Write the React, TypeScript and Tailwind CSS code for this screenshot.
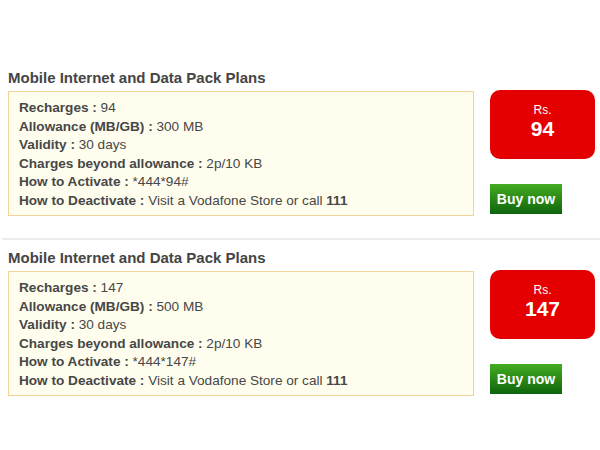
const plans = [
  { price: "94", allowance: "300 MB", code: "*444*94#" },
  { price: "147", allowance: "500 MB", code: "*444*147#" },
];

function Row({ label, children }: { label: string; children: React.ReactNode }) {
  return (
    <div>
      <b className="font-bold">{label} : </b>
      {children}
    </div>
  );
}

function PlanCard({ price, allowance, code }: { price: string; allowance: string; code: string }) {
  return (
    <div className="pl-2">
      <h3 className="text-[15px] font-bold leading-[18px] text-[#454545]">Mobile Internet and Data Pack Plans</h3>
      <div className="mt-[4px] flex items-start">
        <div className="w-[466px] border border-[#f1d49a] bg-[#fffeee] pl-[10px] pt-[7px] pb-[5px] text-[13.6px] leading-[18.5px] text-[#474747]">
          <Row label="Recharges">{price}</Row>
          <Row label="Allowance (MB/GB)">{allowance}</Row>
          <Row label="Validity">30 days</Row>
          <Row label="Charges beyond allowance">2p/10 KB</Row>
          <Row label="How to Activate">{code}</Row>
          <Row label="How to Deactivate">
            Visit a Vodafone Store or call <b className="font-bold">111</b>
          </Row>
        </div>
        <div className="ml-[16px] flex flex-col">
          <div className="-mt-[1px] flex h-[69px] w-[105px] flex-col items-center justify-center rounded-[10px] bg-[#e40000] pb-[5px] text-white">
            <span className="text-[12px] leading-[14px]">Rs.</span>
            <span className="text-[21px] font-bold leading-[24px]">{price}</span>
          </div>
          <button className="mt-[25px] h-[30px] w-[72px] bg-gradient-to-b from-[#44ad22] to-[#0b650c] text-[14px] font-bold text-white">
            Buy now
          </button>
        </div>
      </div>
    </div>
  );
}

export default function App() {
  return (
    <div className="h-[450px] w-[600px] bg-white pt-[69px] font-['Liberation_Sans',Arial,sans-serif]">
      <PlanCard {...plans[0]} />
      <div className="ml-[2px] mt-[22px] mb-[9px] h-[2px] bg-[#ececec]" />
      <PlanCard {...plans[1]} />
    </div>
  );
}
